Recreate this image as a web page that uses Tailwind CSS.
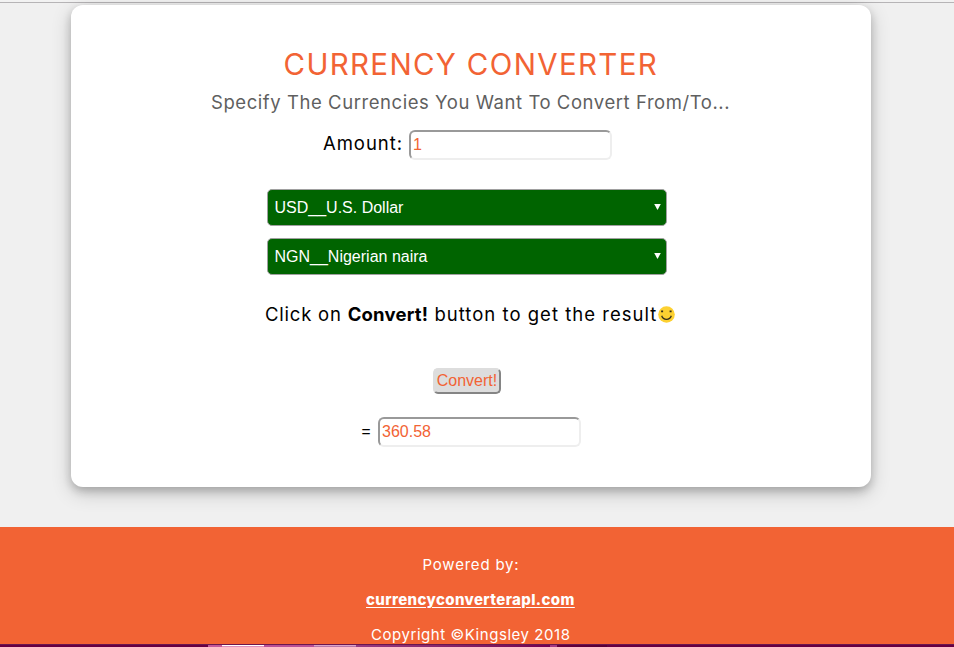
<!DOCTYPE html>
<html lang="en">
<head>
<meta charset="utf-8">
<title>Currency Converter</title>
<script src="https://cdn.jsdelivr.net/npm/@tailwindcss/browser@4"></script>
</head>
<body class="h-[647px] overflow-hidden bg-[#f0f0f0] font-['Inter',sans-serif] flex flex-col">
  <div class="h-[2px] shrink-0 bg-[#f2f2f2]"></div>
  <div class="h-px shrink-0 bg-[#b6b4b6]"></div>
  <main class="mt-[2px] ml-[71px] h-[482px] w-[800px] shrink-0 rounded-xl bg-white shadow-[0_4px_8px_0_rgba(0,0,0,0.2),0_6px_20px_0_rgba(0,0,0,0.19)] whitespace-nowrap">
    <h1 class="ml-[212.5px] pt-[39px] h-[80px] text-[29.5px] leading-[40px] font-normal tracking-[1.34px] text-[#f26334]">CURRENCY CONVERTER</h1>
    <p class="ml-[140px] h-[36px] text-[18.5px] leading-[34px] font-normal tracking-[0.56px] text-[#5f5f5f]">Specify The Currencies You Want To Convert From/To...</p>
    <div class="mt-[9px] flex">
      <label for="amount" class="ml-[252px] w-[86px] text-[18.5px] leading-[27px] font-normal tracking-[0.95px] text-black">Amount:</label>
      <input id="amount" value="1" class="h-[30px] w-[203px] rounded-md border-2 border-t-[#999] border-l-[#999] border-r-[#eee] border-b-[#eee] bg-white px-[2px] font-['Liberation_Sans',sans-serif] text-base text-[#f26334]">
    </div>
    <div class="mt-[29px] ml-[196px] flex w-[400px] flex-col gap-3">
      <div class="flex h-[37px] items-center justify-between rounded-[5px] border border-[#a0a0a0] bg-[#006400] pl-[6.5px] pr-[5.5px] font-['Liberation_Sans',sans-serif] text-base text-white">
        <span>USD__U.S. Dollar</span>
        <svg class="mb-px h-[6px] w-[7px]" viewBox="0 0 7 6" fill="white"><path d="M.2 0h6.6L3.5 6z"/></svg>
      </div>
      <div class="flex h-[37px] items-center justify-between rounded-[5px] border border-[#a0a0a0] bg-[#006400] pl-[6.5px] pr-[5.5px] font-['Liberation_Sans',sans-serif] text-base text-white">
        <span>NGN__Nigerian naira</span>
        <svg class="mb-px h-[6px] w-[7px]" viewBox="0 0 7 6" fill="white"><path d="M.2 0h6.6L3.5 6z"/></svg>
      </div>
    </div>
    <p class="mt-[25px] ml-[194px] flex h-[30px] w-[411px] items-center text-[18.5px] leading-[30px] text-black">
      <span class="mb-[2px] w-[393px] shrink-0"><span class="tracking-[0.78px]">Click on </span><b class="font-bold tracking-[0.2px]">Convert!</b><span class="tracking-[1.02px]"> button to get the result</span></span>
      <svg class="mb-[2px] size-[17px] shrink-0" viewBox="0 0 17 17"><circle cx="8.5" cy="8.5" r="8.3" fill="#fdd131"/><path d="M4.1 4.5v1.8M12.6 4.5v1.8" stroke="#332d1c" stroke-width="2"/><path d="M3.7 9.7c1.5 4.8 8.1 4.8 9.6 0" fill="none" stroke="#332d1c" stroke-width="1.3"/></svg>
    </p>
    <button class="mt-[38px] ml-[362px] block h-[26px] w-[68px] rounded-[5px] border-2 border-t-[#ddd] border-l-[#ddd] border-r-[#858585] border-b-[#858585] bg-[#ddd] font-['Liberation_Sans',sans-serif] text-base leading-[20px] text-[#f26334]">Convert!</button>
    <div class="mt-[23px] flex">
      <span class="ml-[289px] w-[18px] text-[18.5px] leading-[26px] font-light text-black">=</span>
      <input value="360.58" aria-label="Result" class="h-[30px] w-[203px] rounded-md border-2 border-t-[#999] border-l-[#999] border-r-[#eee] border-b-[#eee] bg-white px-[2px] font-['Liberation_Sans',sans-serif] text-base text-[#f26334]">
    </div>
  </main>
  <footer class="mt-[40px] flex h-[117px] w-full shrink-0 flex-col overflow-hidden bg-[#f26334] pt-[20px] text-[15px] leading-[35px] whitespace-nowrap text-white">
    <p class="ml-[422.5px] tracking-[0.8px]">Powered by:</p>
    <a class="ml-[366px] h-[35px] w-fit font-extrabold tracking-[0.38px] underline decoration-1 underline-offset-2">currencyconverterapI.com</a>
    <p class="ml-[371px] tracking-[0.55px]">Copyright ©Kingsley 2018</p>
  </footer>
  <div class="flex h-[3px] shrink-0 border-t border-[#6b174d] bg-[#650044]">
    <div class="ml-[208px] w-[14px] bg-[#c4589a]"></div>
    <div class="w-[42px] border-t border-white bg-[#da8dbb]"></div>
    <div class="w-[50px] bg-[#b95097]"></div>
    <div class="w-[42px] border-t border-[#d9a5c9] bg-[#b777a8]"></div>
    <div class="w-[194px] bg-linear-to-r from-[#963b82] to-[#730052]"></div>
    <div class="w-[7px] bg-[#a53a83]"></div>
    <div class="w-[50px] bg-linear-to-r from-[#65003f] to-[#550038]"></div>
  </div>
</body>
</html>
